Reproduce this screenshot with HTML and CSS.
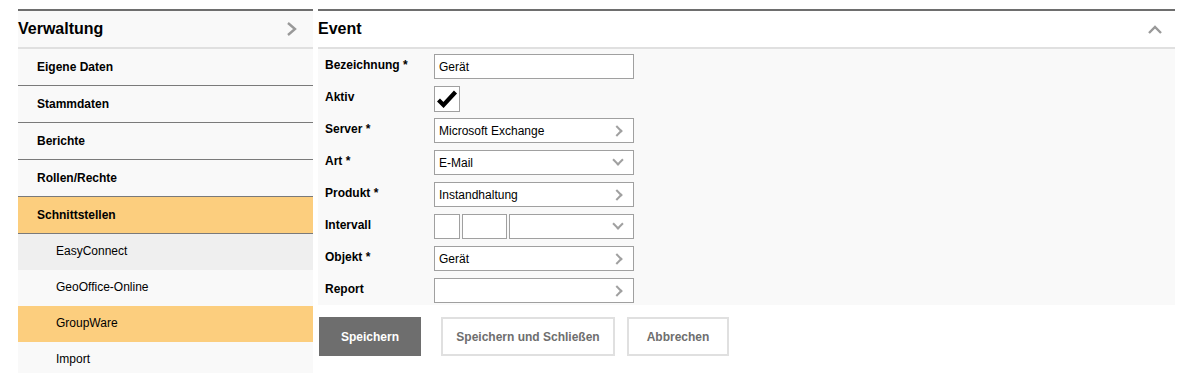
FILE: index.html
```html
<!DOCTYPE html>
<html lang="de">
<head>
    <meta charset="UTF-8">
    <title>Verwaltung - Event</title>
    <link rel="stylesheet" href="styles.css">
</head>
<body>
<div class="page">
    <div class="sidebar">
        <div class="panel-head">
            <h2>Verwaltung</h2>
            <svg class="head-icon" width="14" height="16" viewBox="0 0 14 16"><path d="M3 2 L10 8 L3 14" fill="none" stroke="#999" stroke-width="2.4"/></svg>
        </div>
        <ul class="menu">
            <li class="menu-item">Eigene Daten</li>
            <li class="menu-item">Stammdaten</li>
            <li class="menu-item">Berichte</li>
            <li class="menu-item">Rollen/Rechte</li>
            <li class="menu-item active">Schnittstellen</li>
            <li class="sub-item hover">EasyConnect</li>
            <li class="sub-item">GeoOffice-Online</li>
            <li class="sub-item active">GroupWare</li>
            <li class="sub-item">Import</li>
        </ul>
    </div>

    <div class="content">
        <div class="panel-head white">
            <h2>Event</h2>
            <svg class="head-icon" width="16" height="12" viewBox="0 0 16 12"><path d="M2 10 L8 4 L14 10" fill="none" stroke="#999" stroke-width="2.4"/></svg>
        </div>
        <form class="form">
            <div class="row">
                <label>Bezeichnung *</label>
                <div class="field"><span>Gerät</span></div>
            </div>
            <div class="row">
                <label>Aktiv</label>
                <div class="check">
                    <svg width="22" height="18" viewBox="0 0 22 18"><path d="M2.5 10 L7.5 15 L19.5 2" fill="none" stroke="#000" stroke-width="4.2"/></svg>
                </div>
            </div>
            <div class="row">
                <label>Server *</label>
                <div class="field"><span>Microsoft Exchange</span><i class="arr right"></i></div>
            </div>
            <div class="row">
                <label>Art *</label>
                <div class="field"><span>E-Mail</span><i class="arr down"></i></div>
            </div>
            <div class="row">
                <label>Produkt *</label>
                <div class="field"><span>Instandhaltung</span><i class="arr right"></i></div>
            </div>
            <div class="row">
                <label>Intervall</label>
                <div class="interval">
                    <div class="field small"></div>
                    <div class="field mid"></div>
                    <div class="field grow"><span></span><i class="arr down"></i></div>
                </div>
            </div>
            <div class="row">
                <label>Objekt *</label>
                <div class="field"><span>Gerät</span><i class="arr right"></i></div>
            </div>
            <div class="row">
                <label>Report</label>
                <div class="field"><span></span><i class="arr right"></i></div>
            </div>
        </form>
        <div class="actions">
            <button class="btn primary">Speichern</button>
            <button class="btn save-close">Speichern und Schließen</button>
            <button class="btn cancel">Abbrechen</button>
        </div>
    </div>
</div>
</body>
</html>
```

FILE: styles.css
```css
body {
    margin: 0;
    font-family: "Liberation Sans", Arial, sans-serif;
    color: #000;
    background: #fff;
}
.page {
    display: flex;
    gap: 5px;
    padding: 9px 12px 0 18px;
}
.sidebar {
    width: 295px;
    flex: none;
}
.content {
    flex: 1;
}
.panel-head {
    display: flex;
    align-items: center;
    justify-content: space-between;
    height: 36px;
    border-top: 2px solid #6e6e6e;
    border-bottom: 2px solid #e0e0e0;
    background: #f9f9f9;
    padding: 0 14px 0 0;
}
.panel-head.white {
    background: #fff;
    padding-right: 12px;
}
.panel-head h2 {
    margin: 0;
    font-size: 16px;
    font-weight: bold;
}
.menu {
    list-style: none;
    margin: 0;
    padding: 0;
}
.menu-item {
    height: 36px;
    line-height: 36px;
    padding-left: 19px;
    font-size: 12px;
    font-weight: bold;
    background: #f9f9f9;
    border-bottom: 1px solid #7a7a7a;
}
.sub-item {
    height: 36px;
    line-height: 35px;
    padding-left: 38px;
    font-size: 12px;
    background: #f9f9f9;
}
.sub-item.hover {
    background: #efefef;
}
.menu-item.active, .sub-item.active {
    background: #fcce7e;
}
.form {
    display: flex;
    flex-direction: column;
    gap: 7px;
    background: #f9f9f9;
    padding: 5px 0 2px 7px;
}
.row {
    display: flex;
    height: 25px;
}
.row label {
    width: 109px;
    font-size: 12px;
    font-weight: bold;
    padding-top: 4px;
}
.field {
    box-sizing: border-box;
    width: 200px;
    height: 25px;
    border: 1px solid #a0a0a0;
    background: #fff;
    display: flex;
    align-items: center;
    justify-content: space-between;
    font-size: 12px;
    padding: 1px 0 0 4px;
}
.check {
    box-sizing: border-box;
    width: 26px;
    height: 26px;
    border: 1px solid #a0a0a0;
    background: #fff;
    display: flex;
    align-items: center;
    justify-content: center;
}
.interval {
    display: flex;
    gap: 2px;
}
.field.small {
    width: 26px;
}
.field.mid {
    width: 45px;
}
.field.grow {
    width: 125px;
}
.arr {
    width: 6px;
    height: 6px;
    border-right: 2px solid #a0a0a0;
    border-bottom: 2px solid #a0a0a0;
    margin-right: 11px;
}
.arr.right {
    transform: rotate(-45deg);
    margin-right: 12px;
}
.arr.down {
    transform: translateY(-3px) rotate(45deg);
}
.actions {
    display: flex;
    padding-top: 12px;
    padding-left: 1px;
}
.btn {
    box-sizing: border-box;
    height: 39px;
    padding: 0;
    font-family: "Liberation Sans", Arial, sans-serif;
    font-size: 12px;
    font-weight: bold;
    color: #6e6e6e;
    background: #fff;
    border: 2px solid #e0e0e0;
}
.btn.primary {
    width: 102px;
    background: #6e6e6e;
    border-color: #6e6e6e;
    color: #fff;
}
.btn.save-close {
    width: 174px;
    margin-left: 20px;
}
.btn.cancel {
    width: 102px;
    margin-left: 12px;
}
```
